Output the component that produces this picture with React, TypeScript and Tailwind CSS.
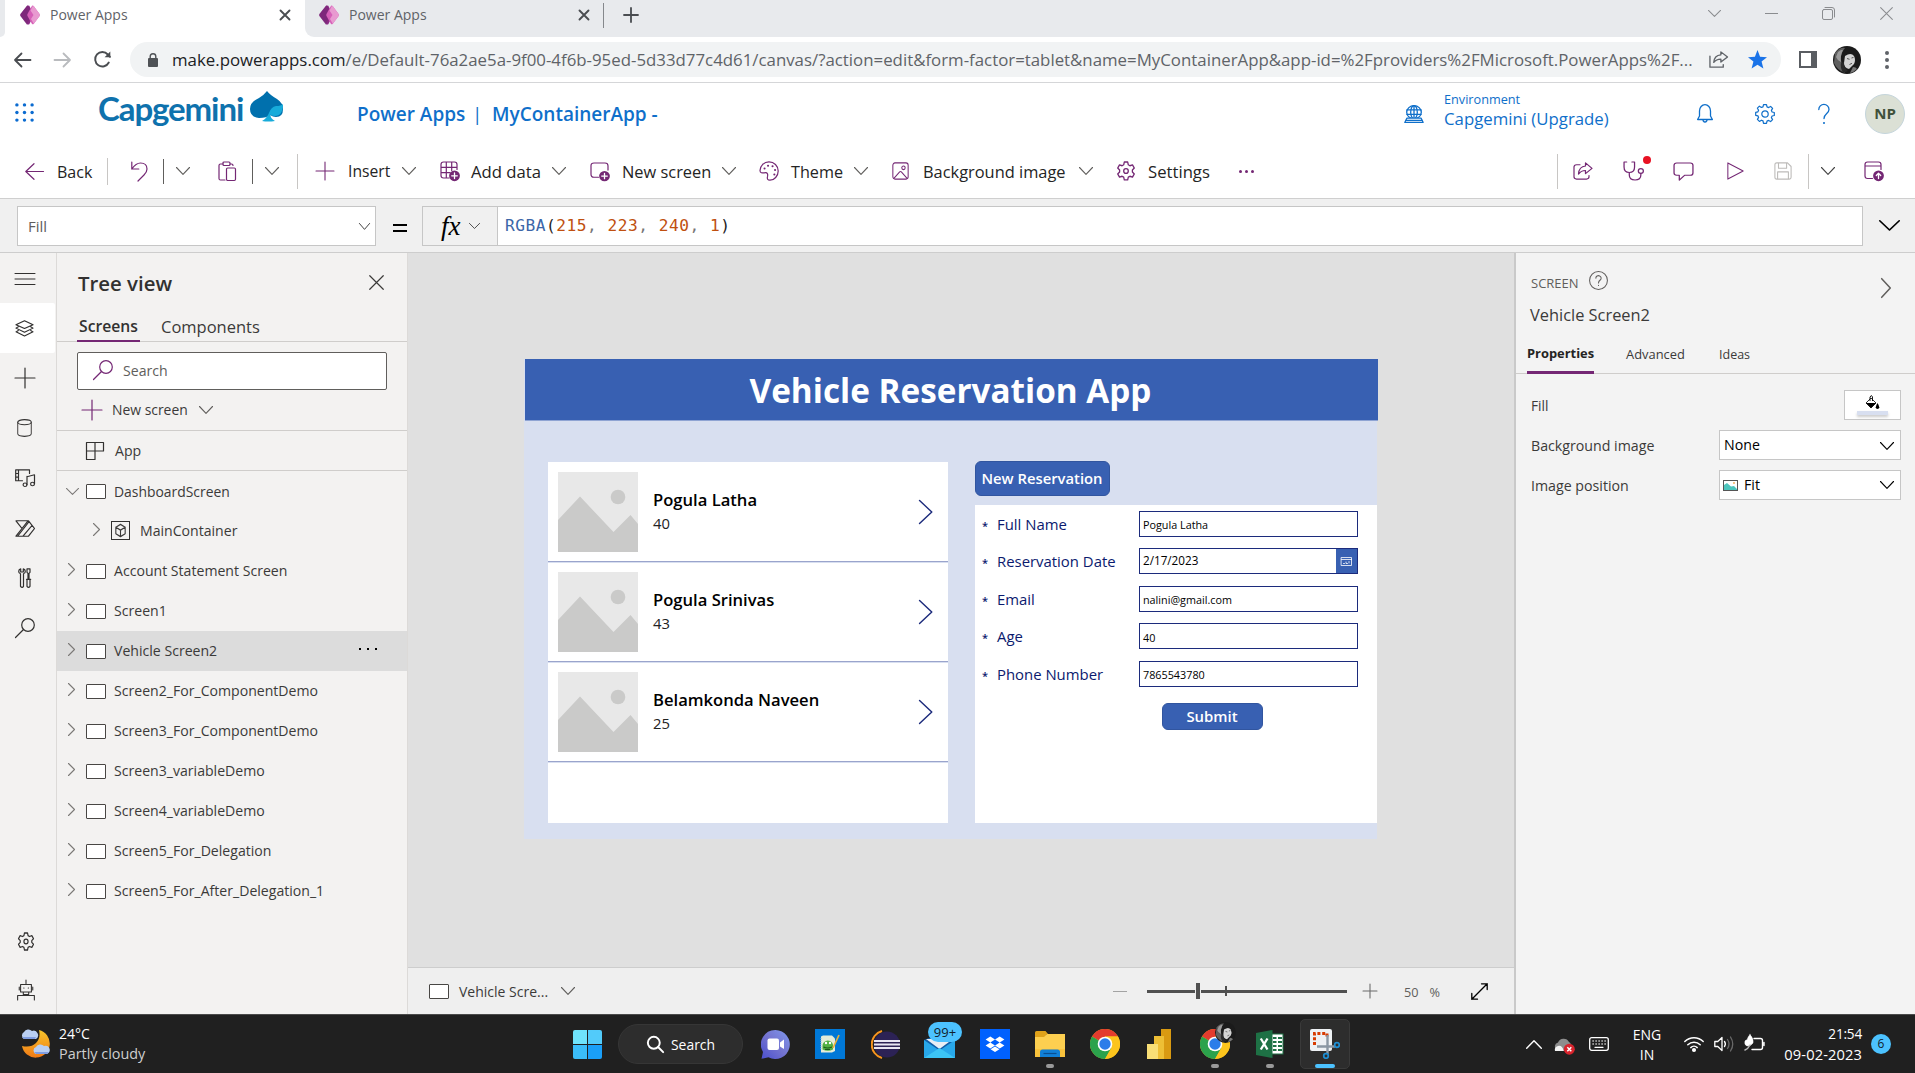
import React from "react";

type P = { className?: string };
type SvgP = P & { vb?: string; sw?: number; children: React.ReactNode };

/* Base wrapper for line icons: stroke follows the current text colour. */
function Svg({ className = "", vb = "0 0 20 20", sw = 1.2, children }: SvgP) {
  return (
    <svg
      className={`block shrink-0 overflow-visible ${className}`}
      viewBox={vb}
      fill="none"
      stroke="currentColor"
      strokeWidth={sw}
      strokeLinecap="round"
      strokeLinejoin="round"
      preserveAspectRatio="none"
    >
      {children}
    </svg>
  );
}

const ChevronDown = ({ className = "" }: P) => (
  <Svg className={className} vb="0 0 14 8" sw={1.1}>
    <path d="M0.5 0.5 7 7.3 13.5 0.5" />
  </Svg>
);
const ChevronRight = ({ className = "" }: P) => (
  <Svg className={className} vb="0 0 7 13" sw={1.1}>
    <path d="M.5 .5 6.5 6.5.5 12.5" />
  </Svg>
);
const Cross = ({ className = "", sw = 1.2 }: P & { sw?: number }) => (
  <Svg className={className} vb="0 0 10 10" sw={sw}>
    <path d="M.5.5 9.5 9.5M9.5.5.5 9.5" />
  </Svg>
);
const Plus = ({ className = "", sw = 1.2 }: P & { sw?: number }) => (
  <Svg className={className} sw={sw}>
    <path d="M10 0v20M0 10h20" />
  </Svg>
);
const Gear = ({ className = "" }: P) => (
  <Svg className={className} sw={1.3}>
    <path d="M8.3 1h3.4l.6 2.6 1.6.9 2.6-.8 1.8 3-1.9 1.9v1.8l1.9 1.9-1.8 3-2.6-.8-1.6.9-.6 2.6H8.3l-.6-2.6-1.6-.9-2.6.8-1.8-3 1.9-1.9V8.6L1.700 6.700l1.8-3 2.600.8 1.600-.9z" />
    <circle cx="10" cy="9.500" r="2.300" />
  </Svg>
);

const PowerAppsLogo = ({ className = "" }: P) => (
  <svg className={`block shrink-0 ${className}`} viewBox="0 0 20 20">
    <path d="M7 .8Q8 0 9.300.8L14 10 9.300 19.200Q8 20 7 19.200L.5 11Q0 10 .5 9z" fill="#8c2b86" />
    <path d="M7.500.3 12.500 7 7 19.700.5 11Q0 10 .5 9z" fill="#742774" opacity=".6" />
    <path d="M12 .8Q13 .3 13.800 1.200L19.600 9Q20 10 19.600 11L13.800 18.800Q13 19.700 12 19L7.500 11Q7 10 7.500 9z" fill="#d660b8" />
    <path d="M13 .7Q13.500.8 13.800 1.200L19.600 9Q20 10 19.600 11L13.800 18.800 11 14 13.500 10 10.500 5.500z" fill="#e89ad0" />
  </svg>
);

const Avatar = ({ className = "" }: P) => (
  <svg className={`block shrink-0 ${className}`} viewBox="0 0 28 28">
    <circle cx="14" cy="14" r="14" fill="#1b1b1b" />
    <path d="M2 7Q7 1 12 2 7 8 8 14q1 8 4 13Q4 24 1 17z" fill="#5f5f5f" />
    <path d="M5 6q4-3 5-2-3 6-2 12-4-2-5-5z" fill="#9a9a9a" />
    <path d="M12 10q6-4 9 0 2 4 0 8l-5 5q-5-1-5-6z" fill="#d4d4d4" />
    <path d="M14 12.500l2.500.8M18.500 12l2-.6M16.500 18.500l2.500-1.200" stroke="#555" strokeWidth="1" />
    <path d="M11 16q-1 5 4 9l-5 2q-3-6-2-10z" fill="#2a2a2a" />
    <path d="M20 21q3 0 4 2-3 3-7 4z" fill="#777" />
  </svg>
);

function BrowserTab({ className }: { className: string }) {
  return (
    <div className={`flex h-[30px] shrink-0 items-center text-[#5f6368] ${className}`}>
      <PowerAppsLogo className="size-5" />
      <span className="ml-[10px] w-[230px] text-[14px] leading-none">Power Apps</span>
      <Cross className="size-[10px] text-[#4a4d51]" sw={1.9} />
    </div>
  );
}

function TabStrip() {
  return (
    <div className="flex h-[37px] shrink-0 bg-white">
      <div className="w-[5px] shrink-0 rounded-br-[5px] bg-[#e8eaed]" />
      <BrowserTab className="w-[300px] pl-[15px]" />
      <div className="flex flex-1 rounded-bl-[9px] bg-[#e8eaed]">
        <BrowserTab className="w-[298px] pl-[14px]" />
        <div className="mt-[3px] h-[25px] w-px bg-[#85888c]" />
        <Plus className="ml-[20px] mt-2 size-[14px] text-[#4a4d51]" sw={2.6} />
        <div className="ml-auto flex h-[26px] items-center pr-[22px] text-[#8a8c8f]">
          <ChevronDown className="h-[7px] w-[13px]" />
          <div className="ml-[44px] h-px w-[13px] bg-[#8a8c8f]" />
          <Svg className="ml-[44px] size-[13px]" vb="0 0 13 13" sw={1}>
            <rect x=".5" y="2.500" width="10" height="10" rx="1.500" />
            <path d="M3 .5h7q2.500 0 2.500 2.500v7" />
          </Svg>
          <Cross className="ml-[45px] size-[13px]" sw={0.8} />
        </div>
      </div>
    </div>
  );
}

const SharePath = () => (
  <>
    <path d="M7 3H3.500Q1 3 1 5.500v11Q1 19 3.500 19h10q2.500 0 2.500-2.500V15" />
    <path d="M12.500 1 19 7l-6.500 6V9.500Q8 9.500 5.500 13.500 6 5 12.500 4.500z" />
  </>
);

function AddressBar() {
  return (
    <div className="flex h-[46px] shrink-0 items-center border-b border-[#d5d6d8] bg-white pl-[14px] text-[#5f6368]">
      <Svg className="h-[14px] w-[17px] text-[#4a4d51]" vb="0 0 17 14" sw={1.8}>
        <path d="M16.500 7H1M7.500.5 1 7l6.500 6.500" />
      </Svg>
      <Svg className="ml-[23px] h-[14px] w-[17px] text-[#b9bbbe]" vb="0 0 17 14" sw={1.800}>
        <path d="M.5 7H16M9.500.5 16 7l-6.500 6.500" />
      </Svg>
      <Svg className="ml-[23px] size-[17px] text-[#4a4d51]" vb="0 0 17 17" sw={1.900}>
        <path d="M14.800 11.500A7.200 7.200 0 1 1 13.800 3.500L16 5.800" />
        <path d="M16.300.5v5.700h-5.700z" fill="currentColor" stroke="none" />
      </Svg>
      <div className="ml-[19px] flex h-[35px] w-[1651px] items-center rounded-full bg-[#f1f3f4] pl-[18px]">
        <svg className="block h-[14px] w-[10px] shrink-0" viewBox="0 0 10 14" fill="#4f5256">
          <rect y="5" width="10" height="9" rx="1" />
          <path d="M2.200 5.500V3.500a2.800 2.800 0 0 1 5.600 0v2" fill="none" stroke="#4f5256" strokeWidth="1.400" />
        </svg>
        <span className="ml-[14px] w-[1537px] whitespace-nowrap text-[16.840px] leading-[30px]">
          <span className="text-[#202124]">make.powerapps.com</span>
          /e/Default-76a2ae5a-9f00-4f6b-95ed-5d33d77c4d61/canvas/?action=edit&amp;form-factor=tablet&amp;name=MyContainerApp&amp;app-id=%2Fproviders%2FMicrosoft.PowerApps%2F...
        </span>
        <Svg className="h-[17px] w-[19px]" sw={1.4}>
          <path d="M1 6v13h14v-3" />
          <path d="M12.500 1 19.500 7l-7 6V9.500Q7.500 9.500 5 13.500 5.500 5 12.500 4.500z" />
        </Svg>
        <svg className="ml-[20px] block size-[19px] shrink-0" viewBox="0 0 20 20" fill="#1a73e8">
          <path d="M10 0 12.700 7 20 7.500 14.300 12.200 16.200 19.500 10 15.400 3.800 19.500 5.700 12.200 0 7.500 7.300 7z" />
        </svg>
      </div>
      <div className="ml-[18px] h-[17px] w-[18px] border-2 border-r-[6px] border-[#5a5d62] bg-white" />
      <Avatar className="ml-[16px] size-[28px]" />
      <div className="ml-[24px] flex flex-col gap-[3px]">
        <i className="size-[4px] rounded-full bg-[#5f6368]" />
        <i className="size-[4px] rounded-full bg-[#5f6368]" />
        <i className="size-[4px] rounded-full bg-[#5f6368]" />
      </div>
    </div>
  );
}

function SuiteHeader() {
  return (
    <div className="flex h-[61px] shrink-0 items-center bg-white pl-[15px] text-[#0f6fca]">
      <svg className="-mt-[2px] block h-[19px] w-[19px] shrink-0" viewBox="0 0 20 20" fill="#0b6bd0">
        {[2, 10, 18].map((y) => [2, 10, 18].map((x) => <circle key={`${x}-${y}`} cx={x} cy={y} r="1.800" />))}
      </svg>
      <div className="ml-[63px] flex h-[50px] w-[187px] items-start pt-[1px]">
        <span className="w-[153px] pl-px font-[Lato] text-[33px] font-bold leading-[36px] tracking-[-1.100px] text-[#0f72ad]">Capgemini</span>
        <svg className="mt-px block h-[31px] w-[33px] shrink-0" viewBox="0 0 33 31">
          <path d="M17 0Q20 4 27 8 33 12 33 18q0 8-7 8-3 0-6-2-3 3-11 3Q0 26 0 18 0 11 9 7 14 4 17 0z" fill="#0070ad" />
          <path d="M33 13q0 12-8 12-3 0-4.500-1.500Q20 27 25 30q-7 1-13 0 5-3 7-8 2-6 7-7 5 0 7-2z" fill="#17abda" />
        </svg>
      </div>
      <div className="ml-[73px] mt-[2px] flex w-[1047px] items-center text-[19px] font-semibold leading-none">
        <span className="w-[115px]">Power Apps</span>
        <span className="w-[20px] font-normal">|</span>
        <span className="whitespace-nowrap">MyContainerApp -</span>
      </div>
      <Svg className="h-[18px] w-[20px]" sw={1.3}>
        <circle cx="10" cy="8" r="7.300" />
        <ellipse cx="10" cy="8" rx="3.300" ry="7.300" />
        <path d="M3 5.500h14M3 10.500h14M10 .7v14.600" />
        <path d="M3 14.500 .8 19.300h18.400L17 14.500z" fill="#fff" />
        <path d="M2 17h16" />
      </Svg>
      <div className="-mt-[8px] ml-[20px] flex w-[253px] flex-col">
        <span className="text-[12.700px] leading-[18px]">Environment</span>
        <span className="whitespace-nowrap text-[16.800px] leading-[22px]">Capgemini (Upgrade)</span>
      </div>
      <Svg className="h-[19px] w-[16px]" vb="0 0 16 19" sw={1.300}>
        <path d="M.6 15.500h14.800L13.500 12V7A5.500 6.300 0 0 0 2.500 7v5zM6 15.500a2 2.500 0 0 0 4 0" />
      </Svg>
      <Svg className="ml-[42px] size-[20px]" sw={1.200}>
        <path d="M8.500.7h3l.5 2.200 1.600.7 2-1.200 2 2-1.200 2 .7 1.600 2.200.5v3l-2.200.5-.7 1.600 1.200 2-2 2-2-1.200-1.600.7-.5 2.200h-3L8 16.900l-1.600-.7-2 1.200-2-2 1.200-2-.7-1.600-2.200-.5v-3l2.200-.5.7-1.600-1.200-2 2-2 2 1.200L8 2.900z" />
        <circle cx="10" cy="10" r="3.200" />
      </Svg>
      <Svg className="ml-[43px] h-[20px] w-[12px]" vb="0 0 12 20" sw={1.300}>
        <path d="M.8 5.500A5 5 0 0 1 11 5.500C11 9.500 6 9.500 6 14.500" />
        <circle cx="6" cy="19" r=".4" fill="currentColor" />
      </Svg>
      <div className="ml-[35px] flex size-[40px] items-center justify-center rounded-full border border-[#c5d5dc] bg-[#dbe0d5] text-[15px] font-bold text-[#40513b]">
        NP
      </div>
    </div>
  );
}

const purple = "text-[#742774]";
const Badge = ({ d }: { d: string }) => (
  <>
    <circle cx="14.500" cy="14.800" r="5.400" fill="#742774" stroke="none" />
    <path d={d} stroke="#fff" strokeWidth="1.300" />
  </>
);

const MenuChevron = () => <ChevronDown className="h-[8px] w-[14px] text-[#605e5c]" />;

function CommandBar() {
  return (
    <div className="flex h-[55px] shrink-0 items-center border-b border-[#cfcfcf] bg-white pl-[25px] text-[16.400px] leading-none text-[#242424]">
      <Svg className={`h-[17px] w-[19px] ${purple}`} vb="0 0 19 17">
        <path d="M18.500 8.500H.8M9 .7.8 8.500 9 16.300" />
      </Svg>
      <span className="ml-[13px] mt-[2px] w-[50px] text-[16px]">Back</span>
      <div className="h-[27px] w-px bg-[#c8c6c4]" />
      <Svg className={`ml-[23px] h-[20px] w-[17px] ${purple}`} vb="0 0 17 20">
        <path d="M.8 1v7h7M.8 8Q5 2 9.500 2q6.500 0 6.500 6 0 3-3 6l-6 6" />
      </Svg>
      <div className="ml-[15px] mr-[12px] h-[25px] w-px bg-[#605e5c]" />
      <MenuChevron />
      <Svg className={`ml-[28px] h-[20px] w-[18px] ${purple}`} vb="0 0 18 20">
        <path d="M7 19H2.500Q1 19 1 17.500v-13Q1 3 2.500 3H5M12 3h1.500Q15 3 15 4.500" />
        <rect x="5" y="1" width="7" height="3.500" rx="1" />
        <rect x="8.500" y="7" width="9" height="12.500" rx="1.200" />
      </Svg>
      <div className="ml-[16px] mr-[12px] h-[25px] w-px bg-[#605e5c]" />
      <MenuChevron />
      <div className="ml-[18px] h-[35px] w-px bg-[#c8c6c4]" />
      <Plus className={`ml-[18px] size-[18px] ${purple}`} />
      <span className="ml-[14px] mt-[2px] w-[54px] text-[15.700px]">Insert</span>
      <MenuChevron />
      <Svg className={`ml-[24px] size-[20px] ${purple}`}>
        <path d="M9 17H3.500Q1 17 1 14.500v-11Q1 1 3.500 1h11Q17 1 17 3.500V8.500M1 6.300h16M1 11.700h9M6.300 1v16M11.700 1v8.500" />
        <Badge d="M14.500 12v5.600M11.700 14.800h5.600" />
      </Svg>
      <span className="ml-[11px] mt-[2px] w-[81px] whitespace-nowrap text-[16.700px]">Add data</span>
      <MenuChevron />
      <Svg className={`ml-[24px] h-[19px] w-[20px] ${purple}`}>
        <path d="M8.500 16H4Q1 16 1 13V4Q1 1 4 1h11q3 0 3 3v4.500" />
        <Badge d="M14.500 12v5.600M11.700 14.800h5.600" />
      </Svg>
      <span className="ml-[12px] mt-[2px] w-[100px] whitespace-nowrap">New screen</span>
      <MenuChevron />
      <Svg className={`ml-[23px] size-[20px] ${purple}`}>
        <path d="M1 9.500A9 9 0 0 1 10 .8c5 0 9.200 4 9.200 9.200 0 5-4 9.200-8.200 9.200-2.500 0-3-1.500-2.500-3.500.5-2.500 0-4-2-4-2 0-5.500 1.300-5.500-2.200z" />
        <path d="M9 4.700h.1M13.500 5.200h.1M16 9h.1M15.300 13.500h.1M5.500 7.500h.1" strokeWidth="2" />
      </Svg>
      <span className="ml-[12px] mt-[2px] w-[63px] text-[16.200px]">Theme</span>
      <MenuChevron />
      <Svg className={`ml-[24px] h-[18px] w-[17px] ${purple}`}>
        <rect x="1" y="1" width="18" height="18" rx="2.500" />
        <path d="M2.500 18 9 11q1-1 2 0l6.500 7" />
        <circle cx="13.500" cy="6.500" r="2" />
      </Svg>
      <span className="ml-[14px] mt-[2px] w-[156px] whitespace-nowrap">Background image</span>
      <MenuChevron />
      <Gear className={`ml-[23px] h-[21px] w-[20px] ${purple}`} />
      <span className="ml-[12px] mt-[2px] w-[91px] text-[16.700px]">Settings</span>
      <div className="flex gap-[3px]">
        <i className="size-[3px] rounded-full bg-[#742774]" />
        <i className="size-[3px] rounded-full bg-[#742774]" />
        <i className="size-[3px] rounded-full bg-[#742774]" />
      </div>
      <div className={`ml-auto flex items-center pr-[31px] ${purple}`}>
        <div className="h-[35px] w-px bg-[#c8c6c4]" />
        <Svg className="ml-[15px] h-[18px] w-[20px]">
          <SharePath />
        </Svg>
        <div className="relative ml-[30px]">
          <Svg className="h-[20px] w-[21px]">
            <path d="M3.500 1H1v5q0 5.500 5 5.500T11 6V1H8.500M6 11.500V14q0 5 5.500 5t5.500-5v-1.500" />
            <circle cx="17" cy="10" r="2.400" />
          </Svg>
          <i className="absolute -right-[7px] -top-[5px] size-[8px] rounded-full bg-[#e81123]" />
        </div>
        <Svg className="ml-[29px] h-[19px] w-[21px]">
          <path d="M3.500 1h13Q19 1 19 3.500v8q0 2.500-2.500 2.500H11l-5 5v-5H3.500Q1 14 1 11.500v-8Q1 1 3.500 1z" />
        </Svg>
        <Svg className="ml-[33px] h-[18px] w-[17px]">
          <path d="M1 1v18L19 10z" />
        </Svg>
        <Svg className="ml-[30px] h-[18px] w-[18px] text-[#bdbbb9]">
          <path d="M1 3q0-2 2-2h12l4 4v12q0 2-2 2H3q-2 0-2-2zM5 1v6h9V1M4 19v-8h12v8" />
        </Svg>
        <div className="ml-[16px] h-[35px] w-px bg-[#c8c6c4]" />
        <ChevronDown className="ml-[12px] h-[8px] w-[14px] text-[#444]" />
        <Svg className="ml-[29px] h-[20px] w-[20px]">
          <path d="M8.500 17.500H3.500Q1 17.500 1 15V3.500Q1 1 3.500 1h11Q17 1 17 3.500V8.500M1 5h16" />
          <Badge d="M14.500 17.500v-5M12.300 14.500 14.500 12.300 16.700 14.500" />
        </Svg>
      </div>
    </div>
  );
}

function FormulaBar() {
  return (
    <div className="flex h-[54px] shrink-0 items-center border-b border-[#cdcdcd] bg-[#f0f0f0] pl-[17px]">
      <div className="flex h-[40px] w-[359px] items-center justify-between border border-[#c6c6c6] bg-white pl-[10px] pr-[5px] pt-px text-[15px] text-[#605e5c]">
        Fill
        <ChevronDown className="h-[7px] w-[11px] text-[#333]" />
      </div>
      <div className="ml-[17px] mt-[5px] h-[8px] w-[14px] border-y-2 border-black" />
      <div className="ml-[15px] flex h-[40px] w-[75px] items-center border border-r-0 border-[#c6c6c6] pl-[18px]">
        <span className="w-[28px] font-['Liberation_Serif'] text-[27px] italic leading-[30px] text-black">fx</span>
        <ChevronDown className="h-[6px] w-[11px] text-[#333]" />
      </div>
      <div className="flex h-[40px] w-[1366px] items-center whitespace-pre border border-[#c6c6c6] bg-white pl-[7px] pt-px font-['DejaVu_Sans_Mono'] text-[16.200px] tracking-[0.500px] text-[#767676]">
        <span className="text-[#3c66a8]">RGBA</span>
        <span className="text-[#222]">(</span>
        <span className="text-[#c05010]">215</span>, <span className="text-[#c05010]">223</span>,{" "}
        <span className="text-[#c05010]">240</span>, <span className="text-[#c05010]">1</span>
        <span className="text-[#222]">)</span>
      </div>
      <ChevronDown className="ml-[16px] h-[11px] w-[21px] text-black" />
    </div>
  );
}

const RailItem = ({ children, on = false }: { children: React.ReactNode; on?: boolean }) => (
  <div className={`flex h-[50px] w-[55px] shrink-0 items-center rounded-r-[2px] pl-[15px] ${on ? "bg-white" : ""}`}>{children}</div>
);

function Rail() {
  return (
    <div className="flex w-[57px] shrink-0 flex-col border-r border-[#dcdad8] bg-[#f3f2f1] text-[#323130]">
      <RailItem>
        <Svg className="mt-px h-[12px] w-[20px]" vb="0 0 20 12" sw={1}>
          <path d="M0 .5h20M0 6h20M0 11.500h20" />
        </Svg>
      </RailItem>
      <RailItem on>
        <Svg className="h-[17px] w-[19px]">
          <path d="M10 .8 19 5.500 10 10 1 5.500zM3.500 8 1 9.600l9 4.800 9-4.800L16.500 8M3.500 12.300 1 13.900l9 5 9-5-2.500-1.600" />
        </Svg>
      </RailItem>
      <RailItem>
        <Plus className="size-[20px]" />
      </RailItem>
      <RailItem>
        <Svg className="ml-[2px] h-[18px] w-[15px]">
          <ellipse cx="10" cy="3.500" rx="9" ry="2.800" />
          <path d="M1 3.500v13q0 2.800 9 2.800t9-2.800v-13" />
        </Svg>
      </RailItem>
      <RailItem>
        <Svg className="h-[18px] w-[20px]">
          <path d="M7.500 13H.7V1H14.500v4M3.500 1v12M.7 5h2.800M.7 9h2.800M12 8v9.500M12 8.500l7.500-2v10" />
          <circle cx="10" cy="17.500" r="1.900" />
          <circle cx="17.500" cy="16.700" r="1.900" />
        </Svg>
      </RailItem>
      <RailItem>
        <Svg className="h-[17px] w-[20px]">
          <path d="M1 1h12.500L19.500 10l-6 9H1l6-9zM7 10 13 1M3 18.500 14 2M8 19 17 6.500" />
        </Svg>
      </RailItem>
      <RailItem>
        <Svg className="ml-[4px] h-[20px] w-[12px]" vb="0 0 12 20">
          <path d="M1.700.8a2.600 2.600 0 0 0-.2 5v12.500q1.700 2 3 0V5.800a2.600 2.600 0 0 0-.2-5V4H1.700zM8 .8h3v3.500l-1 1v6H9v-6l-1-1zM7.500 11.300h4.200M8 11.300v7q1.500 2 3 0v-7" />
        </Svg>
      </RailItem>
      <RailItem>
        <Svg className="size-[20px]">
          <circle cx="13" cy="7" r="6.300" />
          <path d="M8.500 11.500.5 19.500" />
        </Svg>
      </RailItem>
      <div className="mt-auto flex h-[98px] flex-col pl-[17px]">
        <Gear className="mt-[16px] h-[20px] w-[18px]" />
        <Svg className="mt-[28px] h-[20px] w-[18px]">
          <path d="M10 0v3.500M4 4.500h12v7.500H4zM2.500 7v3M17.500 7v3M7 12v2.500h6V12M.7 20v-4.500h18.600V20M7.500 8h.3M12.500 8h.3" />
        </Svg>
      </div>
    </div>
  );
}

const ScreenIcon = ({ className = "" }: P) => (
  <div className={`h-[15px] w-[20px] shrink-0 rounded-[1px] border border-[#484644] bg-white ${className}`} />
);

function ScreenRow({ name, selected = false }: { name: string; selected?: boolean }) {
  return (
    <div className={`flex h-[40px] shrink-0 items-center pl-[11px] ${selected ? "bg-[#dcdcdc]" : ""}`}>
      <ChevronRight className="-mt-[4px] h-[13px] w-[7px] text-[#7a7876]" />
      <ScreenIcon className="ml-[11px]" />
      <span className="ml-[8px] mt-px w-[245px] whitespace-nowrap">{name}</span>
      {selected && (
        <div className="-mt-[4px] flex gap-[6px]">
          <i className="size-[2px] bg-black" />
          <i className="size-[2px] bg-black" />
          <i className="size-[2px] bg-black" />
        </div>
      )}
    </div>
  );
}

function TreeView() {
  return (
    <div className="flex w-[351px] shrink-0 flex-col border-r border-[#dcdad8] bg-[#f3f2f1] text-[14.100px] leading-none text-[#3b3a39]">
      <div className="flex h-[62px] items-center justify-between pl-[21px] pr-[23px]">
        <span className="-mt-px text-[20.400px] font-semibold text-[#323130]">Tree view</span>
        <Cross className="-mt-[3px] size-[15px]" sw={0.800} />
      </div>
      <div className="flex h-[27px] gap-[21px] border-b border-[#cfcdcb] pl-[20px] text-[16.500px]">
        <span className="flex h-[27px] w-[63px] items-center justify-center border-b-2 border-[#742774] pb-px text-[15.700px] font-semibold text-[#323130]">Screens</span>
        <span className="pt-[4px]">Components</span>
      </div>
      <div className="ml-[20px] mt-[10px] flex h-[38px] w-[310px] items-center rounded-[2px] border border-[#605e5c] bg-white pl-[15px] text-[#605e5c]">
        <Svg className={`-mt-[3px] size-[20px] ${purple}`}>
          <circle cx="13" cy="7" r="6.300" />
          <path d="M8.500 11.500.5 19.500" />
        </Svg>
        <span className="ml-[10px] mt-px">Search</span>
      </div>
      <div className="flex h-[41px] items-center border-b border-[#cfcdcb] pl-[25px]">
        <Plus className={`size-[20px] ${purple}`} />
        <span className="ml-[10px] w-[87px] text-[13.900px]">New screen</span>
        <MenuChevron />
      </div>
      <div className="flex h-[40px] items-center border-b border-[#cfcdcb] pl-[29px]">
        <Svg className="size-[18px] text-[#323130]" vb="0 0 18 18">
          <path d="M.5.5h17v8.500H.5zM9 .5v17H.5V.5" />
        </Svg>
        <span className="ml-[11px] mt-[2px]">App</span>
      </div>
      <div className="flex h-[40px] items-center pl-[9px]">
        <ChevronDown className="h-[7px] w-[13px] text-[#7a7876]" />
        <ScreenIcon className="ml-[7px]" />
        <span className="ml-[8px] mt-px text-[13.900px]">DashboardScreen</span>
      </div>
      <div className="flex h-[40px] items-center pl-[36px]">
        <ChevronRight className="-mt-[4px] h-[13px] w-[7px] text-[#7a7876]" />
        <div className="-mt-px ml-[11px] flex size-[19px] items-center justify-center border border-[#323130]">
          <Svg className="h-[13px] w-[11px]" sw={2}>
            <path d="M10 .5 18.500 5v10L10 19.500 1.500 15V5zM1.500 5 10 9.500 18.500 5M10 9.500v10" />
          </Svg>
        </div>
        <span className="ml-[10px] mt-px">MainContainer</span>
      </div>
      <ScreenRow name="Account Statement Screen" />
      <ScreenRow name="Screen1" />
      <ScreenRow name="Vehicle Screen2" selected />
      <ScreenRow name="Screen2_For_ComponentDemo" />
      <ScreenRow name="Screen3_For_ComponentDemo" />
      <ScreenRow name="Screen3_variableDemo" />
      <ScreenRow name="Screen4_variableDemo" />
      <ScreenRow name="Screen5_For_Delegation" />
      <ScreenRow name="Screen5_For_After_Delegation_1" />
    </div>
  );
}

function GalleryItem({ name, age }: { name: string; age: string }) {
  return (
    <div className="flex h-[100px] items-start pl-[10px] pt-[10px] shadow-[0_1px_0_#d8dff0] [border-bottom:1px_solid_#9aa4cc]">
      <svg className="block size-[80px] shrink-0" viewBox="0 0 80 80">
        <rect width="80" height="80" fill="#e8e8e8" />
        <circle cx="60" cy="25" r="7.300" fill="#cacac9" />
        <path d="M0 48 22 24.500 55.500 60 72.500 43 80 52V80H0z" fill="#cacac9" />
      </svg>
      <div className="ml-[15px] flex w-[266px] flex-col pt-[17px] text-black">
        <span className="text-[16.600px] font-semibold leading-[22px]">{name}</span>
        <span className="text-[14.800px] leading-[24px] text-[#222]">{age}</span>
      </div>
      <Svg className="mt-[28px] h-[24px] w-[13px] text-[#1c2b7c]" vb="0 0 12 24" sw={1.300}>
        <path d="M.5.5 11.800 12 .5 23.500" />
      </Svg>
    </div>
  );
}

function FormRow({ label, value, date = false }: { label: string; value: string; date?: boolean }) {
  return (
    <div className="flex h-[37.500px] items-center text-[14.900px] text-[#0b1a6e]">
      <span className="w-[15px] pt-[3px] text-[11px] font-semibold leading-none">*</span>
      <span className="w-[142px] whitespace-nowrap">{label}</span>
      <div className="flex h-[26px] w-[219px] items-center justify-between border border-[#1c2b7c] bg-white pl-[3px] text-black">
        <span className={date ? "text-[11.700px]" : "pt-[3px] text-[10.800px]"}>{value}</span>
        {date && (
          <span className="flex h-full w-[21px] items-center justify-center bg-[#3860b2] text-white">
            <Svg className="h-[9px] w-[11px]" vb="0 0 11 9" sw={0.800}>
              <path d="M.5.5h10v8H.5zM.5 2.500h10M2.500 6.500h1M5 5v1.500h1.500M8 4.500v1.500" />
            </Svg>
          </span>
        )}
      </div>
    </div>
  );
}

function CanvasApp() {
  return (
    <div className="ml-[116px] mt-[106px] flex h-[480px] w-[853px] shrink-0 flex-col bg-[#d8dff0]">
      <div className="-mr-px ml-px flex h-[62px] shrink-0 items-center justify-center border-b border-[#8fa4d3] bg-[#3860b2] pb-px pr-[2px] pt-[5px] text-[33.300px] font-bold text-white">
        <span className="-mt-[2px] leading-none">Vehicle Reservation App</span>
      </div>
      <div className="flex pl-[24px] pt-[41px]">
        <div className="h-[361px] w-[400px] shrink-0 bg-white">
          <GalleryItem name="Pogula Latha" age="40" />
          <GalleryItem name="Pogula Srinivas" age="43" />
          <GalleryItem name="Belamkonda Naveen" age="25" />
        </div>
        <div className="ml-[27px] flex flex-1 flex-col">
          <div className="-mt-px flex h-[35px] w-[135px] items-center justify-center rounded-[6px] border border-[#31559f] bg-[#3860b2] pr-px text-[14.800px] font-semibold text-white">
            New Reservation
          </div>
          <div className="mt-[9px] h-[318px] bg-white pl-[7px]">
            <FormRow label="Full Name" value="Pogula Latha" />
            <FormRow label="Reservation Date" value="2/17/2023" date />
            <FormRow label="Email" value="nalini@gmail.com" />
            <FormRow label="Age" value="40" />
            <FormRow label="Phone Number" value="7865543780" />
            <div className="ml-[180px] mt-[10px] flex h-[27px] w-[101px] items-center justify-center rounded-[6px] border border-[#31559f] bg-[#3860b2] pr-px pt-px text-[14.900px] font-semibold text-white">
              Submit
            </div>
          </div>
        </div>
      </div>
    </div>
  );
}

function StatusBar() {
  return (
    <div className="mt-auto flex h-[47px] shrink-0 items-center border-t border-[#cdcdcd] bg-[#efefef] pl-[21px] text-[14px] leading-none text-[#3b3a39]">
      <ScreenIcon />
      <span className="ml-[10px] mt-[2px] w-[102px] whitespace-nowrap">Vehicle Scre...</span>
      <ChevronDown className="-mt-px h-[8px] w-[14px] text-[#605e5c]" />
      <div className="ml-[538px] h-px w-[14px] bg-[#a3a3a3]" />
      <div className="ml-[20px] flex h-[16px] w-[200px] items-center">
        <div className="h-[3px] w-[48px] bg-[#505050]" />
        <div className="ml-px h-[16px] w-[4px] bg-[#505050]" />
        <div className="ml-px h-[3px] w-[24px] bg-[#505050]" />
        <div className="h-[10px] w-[2px] bg-[#505050]" />
        <div className="h-[3px] flex-1 bg-[#505050]" />
      </div>
      <Plus className="ml-[16px] size-[14px] text-[#6a6a6a]" sw={1.500} />
      <span className="ml-[27px] mt-[2px] text-[12.700px] text-[#605e5c]">50</span>
      <span className="ml-[11px] mt-[2px] text-[12.700px] text-[#605e5c]">%</span>
      <Svg className="ml-[31px] size-[17px] text-black" vb="0 0 17 17" sw={1.300}>
        <path d="M.8 16.200 16.200.8M10.500.8h5.700v5.700M.8 10.500v5.700h5.700" />
      </Svg>
    </div>
  );
}

function PropertyPane() {
  return (
    <div className="flex w-[401px] shrink-0 flex-col border-l-2 border-[#c9c9c9] bg-[#f3f3f3] pl-[15px] pr-[14px] text-[14.200px] leading-none text-[#3b3a39]">
      <div className="mt-[18px] flex h-[63px] justify-between">
        <div>
          <div className="flex items-center">
            <span className="mt-[5px] w-[58px] text-[13px] text-[#605e5c]">SCREEN</span>
            <Svg className="size-[19px] text-[#605e5c]" sw={1.100}>
              <circle cx="10" cy="10" r="9.400" />
              <path d="M7.200 7.500a2.800 2.600 0 1 1 4.600 2Q10 11 10 12.500M10 15v.2" />
            </Svg>
          </div>
          <div className="-ml-px mt-[17px] text-[16.400px]">Vehicle Screen2</div>
        </div>
        <ChevronRight className="mr-[10px] mt-[7px] h-[20px] w-[10px] text-[#605e5c]" />
      </div>
      <div className="-ml-[15px] -mr-[14px] flex h-[40px] border-b border-[#cfcdcb] pl-[11px] text-[12.900px]">
        <span className="flex h-[40px] w-[67px] items-center border-b-3 border-[#742774] pt-px font-bold text-[#252423]">Properties</span>
        <span className="ml-[32px] w-[93px] pt-[14px]">Advanced</span>
        <span className="pt-[15px] text-[12.500px]">Ideas</span>
      </div>
      <div className="mt-[16px] flex h-[30px] items-center justify-between">
        <span className="pt-[2px] text-[13.700px]">Fill</span>
        <div className="flex h-[30px] w-[57px] flex-col items-center border border-[#c6c6c6] bg-white pt-[4px]">
          <svg className="block h-[15px] w-[14px]" viewBox="0 0 14 15">
            <path d="M0 8 5 3l5 5-5 5z" fill="#fff" stroke="#000" strokeWidth=".8" />
            <path d="M0 8h10l-5 5z" fill="#000" />
            <path d="M4 6V2q1.500-3 2.500 0v4" fill="none" stroke="#000" strokeWidth=".9" />
            <path d="M11.500 8q3.500 5.500 0 6-3.500-.5 0-6z" fill="#000" />
          </svg>
          <div className="mt-[1px] h-[4px] w-[31px] bg-[#d8dff0] shadow-[0_2px_3px_#cccccc]" />
        </div>
      </div>
      <div className="mt-[10px] flex h-[30px] items-center justify-between">
        <span className="pt-[2px]">Background image</span>
        <div className="flex h-[30px] w-[182px] items-center justify-between border border-[#c6c6c6] bg-white pl-[4px] pr-[6px] pt-px text-black">
          None
          <ChevronDown className="h-[8px] w-[14px]" />
        </div>
      </div>
      <div className="mt-[10px] flex h-[30px] items-center justify-between">
        <span className="pt-[2px]">Image position</span>
        <div className="flex h-[30px] w-[182px] items-center border border-[#c6c6c6] bg-white pl-[3px] pr-[6px] text-black">
          <svg className="block h-[11px] w-[15px]" viewBox="0 0 15 11">
            <rect x=".5" y=".5" width="14" height="10" fill="#fff" stroke="#555" />
            <path d="M1 5 4 3l4 3.500L11 6l3 3v1H1z" fill="#4cc5bd" />
            <circle cx="11" cy="3" r=".9" fill="#f4a84a" />
          </svg>
          <span className="ml-[6px]">Fit</span>
          <ChevronDown className="ml-auto h-[8px] w-[14px]" />
        </div>
      </div>
    </div>
  );
}

const Chrome = () => (
  <svg className="block size-[30px]" viewBox="0 0 30 30">
    <circle cx="15" cy="15" r="15" fill="#fbc116" />
    <path d="M15 15 2 7.500A15 15 0 0 1 28 7.500H15z" fill="#e33b2e" />
    <path d="M2 7.500A15 15 0 0 0 15 30l6.500-11.200L15 15z" fill="#2ba24c" />
    <path d="M28 7.500H15v7.500l6.500 3.700L15 30A15 15 0 0 0 28 7.500z" fill="#fcc41c" />
    <circle cx="15" cy="15" r="7.300" fill="#fff" />
    <circle cx="15" cy="15" r="5.700" fill="#2b7de9" />
  </svg>
);

const TaskIcon = ({ children, running = false, active = false }: { children: React.ReactNode; running?: boolean; active?: boolean }) => (
  <div className={`relative flex h-[50px] w-[50px] shrink-0 items-center justify-center rounded-[5px] ${active ? "border border-[#3a3a3a] bg-[#2d2d2d]" : ""}`}>
    {children}
    {running && <i className="absolute bottom-[1px] h-[4px] w-[8px] rounded-full bg-[#9a9a9a]" />}
    {active && <i className="absolute bottom-0 h-[4px] w-[20px] rounded-full bg-[#4cc2ff]" />}
  </div>
);

function Taskbar() {
  return (
    <div className="flex h-[59px] shrink-0 items-center border-t border-[#4a4a4a] bg-[#202020] pl-[19px] text-[14px] leading-[20px] text-white">
      <svg className="-mt-[4px] block size-[31px] shrink-0" viewBox="0 0 31 31">
        <defs>
          <linearGradient id="moon" x1="0" y1="0" x2="0" y2="1">
            <stop offset="0" stopColor="#f7c52b" />
            <stop offset="1" stopColor="#f07a16" />
          </linearGradient>
        </defs>
        <path d="M20 3A14 14 0 1 1 3 19q9 2 14-3 5-5 3-13z" fill="url(#moon)" />
        <path d="M5 12a4 4 0 0 1 0-7 5 5 0 0 1 8-1 4.500 4.500 0 0 1 4 8z" fill="#b9cff2" />
        <path d="M17 27a3.700 3.700 0 0 1 0-7 5 5 0 0 1 8-1 4 4 0 0 1 3 8z" fill="#b9cff2" />
        <path d="M3 10h14l-1 2H5zM15 25h15l-2 2H17z" fill="#7f9de0" />
      </svg>
      <div className="ml-[9px] flex w-[514px] flex-col">
        <span>24°C</span>
        <span className="text-[14.400px] text-[#cfcfcf]">Partly cloudy</span>
      </div>
      <div className="grid size-[29px] shrink-0 grid-cols-2 gap-px">
        <i className="rounded-tl-[2px] bg-[#6fe3fb]" />
        <i className="rounded-tr-[2px] bg-[#52cbfa]" />
        <i className="rounded-bl-[2px] bg-[#3bbdf8]" />
        <i className="rounded-br-[2px] bg-[#1a9ff8]" />
      </div>
      <div className="ml-[16px] flex h-[40px] w-[125px] shrink-0 items-center rounded-full border border-[#363636] bg-[#2d2d2d] pl-[28px] text-[13.900px]">
        <Svg className="size-[17px]" sw={2.300}>
          <circle cx="8" cy="8" r="7" />
          <path d="M13 13l6 6" />
        </Svg>
        <span className="ml-[7px] pt-px">Search</span>
      </div>
      <div className="ml-[7px] flex gap-[5px]">
        <TaskIcon>
          <svg className="block size-[29px]" viewBox="0 0 29 29">
            <defs>
              <linearGradient id="chat" x1="1" y1="0" x2="0" y2="1">
                <stop offset="0" stopColor="#7f98ee" />
                <stop offset=".5" stopColor="#7474cf" />
                <stop offset="1" stopColor="#4a4fd0" />
              </linearGradient>
            </defs>
            <path d="M14.500 0a14.500 14.500 0 1 1-7 27.300L.5 28.800 2 22A14.500 14.500 0 0 1 14.500 0z" fill="url(#chat)" />
            <rect x="6.500" y="8.500" width="11.500" height="11.500" rx="2" fill="#fff" />
            <path d="M19 12.500 23 9.500v9.500L19 16.500z" fill="#fff" />
          </svg>
        </TaskIcon>
        <TaskIcon>
          <svg className="block size-[30px]" viewBox="0 0 30 30">
            <rect width="30" height="30" fill="#0078d7" />
            <path d="M6 7.500 8 6.500h9l3 3V22l-3 1.500H6z" fill="#e4ecd9" />
            <path d="M6 9v11" stroke="#9ab6cf" strokeDasharray="1 1" />
            <path d="M7.500 16q1-4 5-4.500 4 0 5.500 4v5q-5 2.500-10.500 0z" fill="#52b043" />
            <circle cx="11" cy="14" r="1.200" fill="#fff" />
            <circle cx="15" cy="14" r="1.200" fill="#fff" />
            <path d="M8.500 18q4 2 8.500 0M10 20.500h5" stroke="#1b5a1a" strokeWidth="1.200" fill="none" />
            <path d="M24 6 18 19" stroke="#e9b03a" strokeWidth="1.700" />
          </svg>
        </TaskIcon>
        <TaskIcon>
          <svg className="block size-[29px]" viewBox="0 0 29 29">
            <path d="M11 1A14 14 0 0 0 11 28" fill="none" stroke="#f7941e" strokeWidth="2" />
            <circle cx="16" cy="14.500" r="13" fill="#2c2255" />
            <path d="M3 11h26M3 14.500h26M3 18h26" stroke="#e8e6f2" strokeWidth="1.800" />
          </svg>
        </TaskIcon>
        <TaskIcon>
          <svg className="mr-px mt-[4px] block h-[24px] w-[31px]" viewBox="0 0 31 24">
            <path d="M0 6 15 0l16 6v18H0z" fill="#0f5ea8" />
            <path d="M2 5h27L15.500 15z" fill="#e8eef4" />
            <path d="M0 6 15.500 16.500 31 6v18H0z" fill="#28a8ea" />
            <path d="M0 24 15.500 14 31 24z" fill="#3cc5f5" />
          </svg>
          <span className="absolute left-[13px] top-[3px] flex h-[20px] w-[34px] items-center justify-center rounded-full bg-[#4cc2ff] text-[13px] text-[#10202c]">99+</span>
        </TaskIcon>
        <TaskIcon>
          <svg className="block size-[30px]" viewBox="0 0 30 30">
            <rect width="30" height="30" fill="#0061fe" />
            <path d="m10.300 7.500 4.700 3-4.700 3-4.700-3zM19.700 7.500l4.700 3-4.700 3-4.700-3zM10.300 13.500l4.700 3-4.700 3-4.700-3zM19.700 13.500l4.700 3-4.700 3-4.700-3zM15 17.500l4.500 2.800-4.500 2.800-4.500-2.800z" fill="#fff" />
          </svg>
        </TaskIcon>
        <TaskIcon running>
          <svg className="block size-[30px]" viewBox="0 0 30 30">
            <path d="M0 3.500q0-1.500 1.500-1.500h9L13 5h-1L9 10H0z" fill="#e0a21a" />
            <path d="M0 8h9l3-3h18v23H0z" fill="#fdcf50" />
            <path d="M0 20h30v8H0z" fill="#f9c23c" />
            <path d="M5 28v-5q0-2.500 2.500-2.500h15Q25 20.500 25 23v5z" fill="#1180d8" />
            <path d="M8.500 24.500h13" stroke="#0a4f93" strokeWidth="1.200" />
          </svg>
        </TaskIcon>
        <TaskIcon>
          <Chrome />
        </TaskIcon>
        <TaskIcon>
          <svg className="ml-[-2px] block h-[30px] w-[24px]" viewBox="0 0 24 30">
            <path d="M14 0h10v30H14z" fill="#d99a12" />
            <path d="M7 7h10v23H7z" fill="#eebf35" />
            <path d="M0 15h11v15H0z" fill="#f8de76" />
          </svg>
        </TaskIcon>
        <TaskIcon running>
          <Chrome />
          <Avatar className="absolute left-[25px] top-[3px] size-[21px]" />
        </TaskIcon>
        <TaskIcon running>
          <svg className="block h-[28px] w-[28px]" viewBox="0 0 28 28">
            <rect x="14" y="4" width="13" height="20" fill="#fff" stroke="#1e7145" />
            <path d="M17 8h3.500M22 8h4M17 12h3.500M22 12h4M17 16h3.500M22 16h4M17 20h3.500M22 20h4" stroke="#1e7145" strokeWidth="1.800" />
            <path d="M0 3 16.500 0v28L0 25z" fill="#1e7145" />
            <path d="M4.800 8.500 11.500 19.500M11.500 8.500 4.800 19.500" stroke="#fff" strokeWidth="2.300" />
          </svg>
        </TaskIcon>
        <TaskIcon active>
          <svg className="block size-[30px]" viewBox="0 0 30 30">
            <rect width="22" height="22" rx="2" fill="#eef1f4" />
            <path d="M4.500 16V4.500H17V8" fill="none" stroke="#d83b01" strokeWidth="3" strokeDasharray="3 1.800" />
            <path d="M17.500 6v19M7 17.500h18" stroke="#8b97a3" strokeWidth="2.400" />
            <circle cx="27" cy="16" r="2.300" fill="none" stroke="#1d8fd6" strokeWidth="1.700" />
            <circle cx="16" cy="27" r="2.300" fill="none" stroke="#1d8fd6" strokeWidth="1.700" />
          </svg>
        </TaskIcon>
      </div>
      <div className="ml-auto flex items-center pr-[24px]">
        <Svg className="h-[9px] w-[16px]" vb="0 0 16 9" sw={1.400}>
          <path d="M.7 8.300 8 .8l7.300 7.500" />
        </Svg>
        <svg className="ml-[12px] mt-[4px] block h-[17px] w-[21px]" viewBox="0 0 21 17">
          <path d="M3 12a4 4 0 0 1 1-7.500A6 6 0 0 1 15 4q3 1 2 8z" fill="#8d8d8d" />
          <path d="M1 13q-1-4 3-5t6 5z" fill="#f2f2f2" />
          <circle cx="15.300" cy="11.200" r="5.500" fill="#d9242d" />
          <path d="m13.300 9.200 4 4m0-4-4 4" stroke="#fff" strokeWidth="1.500" />
        </svg>
        <Svg className="ml-[14px] h-[14px] w-[20px]" vb="0 0 20 14" sw={1.300}>
          <rect x=".7" y=".7" width="18.600" height="12.600" rx="2" />
          <path d="M4 4h.2M7 4h.2M10 4h.2M13 4h.2M16 4h.2M4 7h.2M7 7h.2M10 7h.2M13 7h.2M16 7h.2M6 10.300h8" />
        </Svg>
        <div className="ml-[23px] flex w-[30px] flex-col items-center pt-px">
          <span>ENG</span>
          <span>IN</span>
        </div>
        <Svg className="ml-[22px] h-[16px] w-[20px]" vb="0 0 20 16" sw={1.500}>
          <path d="M.8 5.500a13 13 0 0 1 18.400 0M3.800 8.700a8.800 8.800 0 0 1 12.400 0M6.800 11.600a4.600 4.600 0 0 1 6.400 0" />
          <circle cx="10" cy="14" r="1.300" fill="currentColor" />
        </Svg>
        <Svg className="ml-[10px] h-[16px] w-[20px]" vb="0 0 20 16" sw={1.300}>
          <path d="M.8 5.500h3L8 1.500v13l-4.200-4h-3zM10.500 5.500q1.800 2.500 0 5" />
          <path d="M13.500 3.500q3 4.500 0 9M16.500 1q4.500 7 0 14" stroke="#6a6a6a" />
        </Svg>
        <Svg className="-mt-[3px] ml-[10px] h-[17px] w-[21px]" vb="0 0 21 17" sw={1.400}>
          <path d="M10 4.500h6.500q2 0 2 2v7q0 2-2 2H8M20 8.500v3" />
          <path d="M6 .5Q10 5 9 9q-2 3-6 3-3-1-2-5 1-1.500 2-1 1-3.500 3-5.500z" fill="currentColor" strokeWidth=".5" />
          <path d="M1 16q3-1 5-5" stroke="#bbb" />
        </Svg>
        <div className="ml-[13px] flex w-[84px] flex-col items-end">
          <span className="text-[13.600px] tracking-[-0.200px]">21:54</span>
          <span className="text-[14.700px] tracking-[0.100px]">09-02-2023</span>
        </div>
        <div className="ml-[9px] flex size-[20px] items-center justify-center rounded-full bg-[#4cc2ff] text-[12px] text-[#10202c]">6</div>
      </div>
    </div>
  );
}

export default function App() {
  return (
    <div className="flex h-[1073px] w-[1915px] flex-col overflow-hidden bg-white font-['Open_Sans',sans-serif]">
      <TabStrip />
      <AddressBar />
      <SuiteHeader />
      <CommandBar />
      <FormulaBar />
      <div className="flex min-h-0 flex-1">
        <Rail />
        <TreeView />
        <div className="flex min-w-0 flex-1 flex-col bg-[#e0e0e0]">
          <CanvasApp />
          <StatusBar />
        </div>
        <PropertyPane />
      </div>
      <Taskbar />
    </div>
  );
}
